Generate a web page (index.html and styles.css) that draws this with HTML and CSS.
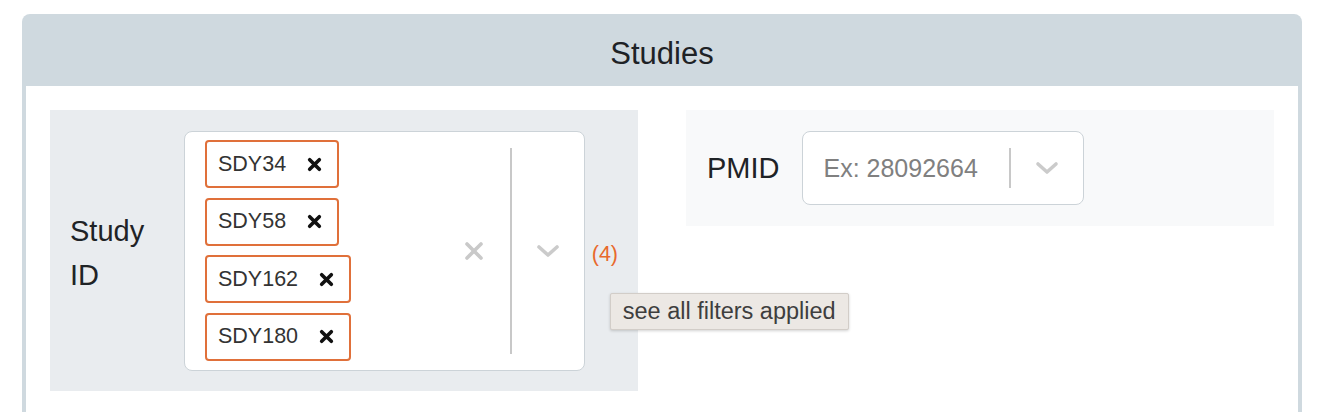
FILE: index.html
```html
<!DOCTYPE html>
<html lang="en">
<head>
<meta charset="utf-8">
<title>Studies</title>
<link rel="stylesheet" href="styles.css">
</head>
<body>
<section class="card">
  <header class="card-header">Studies</header>
  <div class="card-body">
    <div class="filter filter-study">
      <label class="filter-label">Study ID</label>
      <div class="select">
        <div class="select-values">
          <span class="tag"><span class="tag-text">SDY34</span><svg class="tag-x" viewBox="0 0 14 14"><path d="M2.5 2.5L11.5 11.5M11.5 2.5L2.5 11.5"/></svg></span>
          <span class="tag"><span class="tag-text">SDY58</span><svg class="tag-x" viewBox="0 0 14 14"><path d="M2.5 2.5L11.5 11.5M11.5 2.5L2.5 11.5"/></svg></span>
          <span class="tag"><span class="tag-text">SDY162</span><svg class="tag-x" viewBox="0 0 14 14"><path d="M2.5 2.5L11.5 11.5M11.5 2.5L2.5 11.5"/></svg></span>
          <span class="tag"><span class="tag-text">SDY180</span><svg class="tag-x" viewBox="0 0 14 14"><path d="M2.5 2.5L11.5 11.5M11.5 2.5L2.5 11.5"/></svg></span>
        </div>
        <div class="indicator"><svg class="clear-x" viewBox="0 0 20 20"><path d="M3 3L17 17M17 3L3 17"/></svg></div>
        <span class="separator"></span>
        <div class="indicator"><svg class="chevron" viewBox="0 0 24 14"><path d="M3 3L12 11L21 3"/></svg></div>
      </div>
      <span class="count">(4)<span class="tooltip">see all filters applied</span></span>
    </div>
    <div class="filter filter-pmid">
      <label class="filter-label">PMID</label>
      <div class="select select-single">
        <div class="select-values select-values-single">
          <span class="placeholder">Ex: 28092664</span>
        </div>
        <span class="separator"></span>
        <div class="indicator"><svg class="chevron" viewBox="0 0 24 14"><path d="M3 3L12 11L21 3"/></svg></div>
      </div>
    </div>
  </div>
</section>
</body>
</html>
```

FILE: styles.css
```css
html, body {
  margin: 0;
  padding: 0;
  background: #ffffff;
  font-family: "Liberation Sans", Arial, Helvetica, sans-serif;
  color: #222;
}

.card {
  margin: 14px 16px 0 22px;
  background: #cfd9df;
  border-radius: 8px 8px 0 0;
  padding: 0 4px 4px;
}

.card-header {
  height: 72px;
  box-sizing: border-box;
  padding-top: 20px;
  text-align: center;
  font-size: 31px;
  line-height: 40px;
  color: #1e2226;
}

.card-body {
  background: #ffffff;
  display: grid;
  grid-template-columns: 1fr 1fr;
  column-gap: 48px;
  align-items: start;
  padding: 24px 24px 30px;
}

.filter {
  display: flex;
  align-items: center;
  gap: 22px;
}

.filter-study {
  background: #e9ecef;
  padding: 21px 20px 20px;
}

.filter-pmid {
  background: #f8f9fa;
  padding: 21px 21px 21px;
}

.filter-label {
  max-width: 92px;
  font-size: 29px;
  line-height: 44px;
  color: #1f2326;
}

.filter-study .filter-label {
  margin-top: 4px;
}

.select {
  display: flex;
  align-items: stretch;
  width: 401px;
  box-sizing: border-box;
  background: #fff;
  border: 1px solid #ccd3d8;
  border-radius: 8px;
}

.select-single {
  width: 282px;
  height: 74px;
}

.select-values {
  flex: 1;
  display: flex;
  flex-direction: column;
  align-items: flex-start;
  gap: 9.5px;
  padding: 8px 0 9px 20px;
}

.select-values-single {
  justify-content: center;
  padding: 0 0 0 21px;
}

.placeholder {
  font-size: 25px;
  color: #808080;
  white-space: nowrap;
}

.tag {
  display: flex;
  align-items: center;
  height: 48px;
  box-sizing: border-box;
  border: 2px solid #e0703a;
  border-radius: 4px;
  padding: 0 15px 0 11px;
  background: #fff;
}

.tag-text {
  font-size: 21.5px;
  color: #333;
}

.tag-x {
  width: 15px;
  height: 15px;
  margin-left: 21px;
  fill: none;
  stroke: #111;
  stroke-width: 3.4;
  stroke-linecap: round;
}

.indicator {
  width: 72px;
  display: flex;
  align-items: center;
  justify-content: center;
}

.clear-x {
  width: 20px;
  height: 20px;
  fill: none;
  stroke: #c9c9c9;
  stroke-width: 3.6;
  stroke-linecap: round;
}

.chevron {
  width: 24px;
  height: 14px;
  fill: none;
  stroke: #cbcbcb;
  stroke-width: 3.6;
  stroke-linecap: round;
  stroke-linejoin: round;
}

.separator {
  width: 1.5px;
  background: #c8c8c8;
  margin: 16px 0;
}

.count {
  position: relative;
  margin-left: -15px;
  margin-top: 6px;
  font-size: 21.5px;
  line-height: 24px;
  color: #e8692c;
}

.tooltip {
  position: absolute;
  left: 18px;
  top: 51px;
  z-index: 2;
  white-space: nowrap;
  font-size: 23.5px;
  line-height: 25px;
  color: #3e3e3e;
  background: #ece8e4;
  border: 1px solid #d2cdc8;
  border-radius: 2px;
  padding: 5px 12px 5px 12px;
  box-shadow: 0 1px 3px rgba(0, 0, 0, 0.18);
}
```
